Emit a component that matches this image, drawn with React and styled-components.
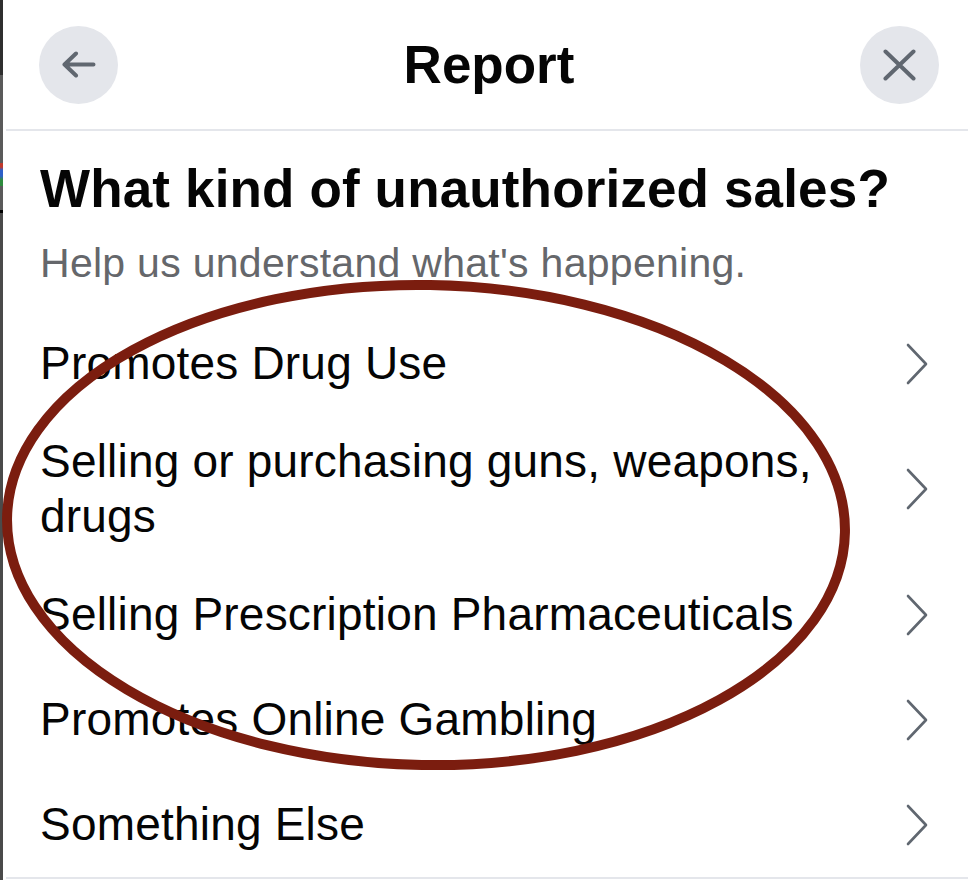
import styled, { createGlobalStyle } from "styled-components";

const GlobalStyle = createGlobalStyle`
  * {
    box-sizing: border-box;
  }
  body {
    margin: 0;
    background: #ffffff;
    font-family: "Liberation Sans", Arial, sans-serif;
  }
`;

const options = [
  "Promotes Drug Use",
  "Selling or purchasing guns, weapons, drugs",
  "Selling Prescription Pharmaceuticals",
  "Promotes Online Gambling",
  "Something Else",
];

export default function App() {
  return (
    <>
      <GlobalStyle />
      <Page>
        <Edge />
        <Sheet>
          <Header>
            <RoundButton aria-label="Back">
              <svg width="34" height="27" viewBox="0 0 34 27">
                <path
                  d="M14 2.5 L2.5 13.5 L14 24.5 M2.5 13.5 H31.5"
                  fill="none"
                  stroke="#606770"
                  strokeWidth="4"
                  strokeLinecap="round"
                  strokeLinejoin="round"
                />
              </svg>
            </RoundButton>
            <Title>Report</Title>
            <RoundButton aria-label="Close">
              <svg width="33" height="32" viewBox="0 0 33 32">
                <path
                  d="M2.5 2.5 L30.5 29.5 M30.5 2.5 L2.5 29.5"
                  fill="none"
                  stroke="#606770"
                  strokeWidth="4"
                  strokeLinecap="round"
                />
              </svg>
            </RoundButton>
          </Header>
          <Heading>What kind of unauthorized sales?</Heading>
          <Sub>Help us understand what's happening.</Sub>
          <List>
            {options.map((label) => (
              <Row key={label}>
                <Label>{label}</Label>
                <svg width="22" height="42" viewBox="0 0 22 42">
                  <path
                    d="M2 2 L20 21 L2 40"
                    fill="none"
                    stroke="#606770"
                    strokeWidth="2.6"
                    strokeLinecap="round"
                    strokeLinejoin="round"
                  />
                </svg>
              </Row>
            ))}
          </List>
        </Sheet>
        <Scribble viewBox="0 0 968 880">
          <ellipse
            cx="426"
            cy="525"
            rx="419"
            ry="240"
            transform="rotate(1 426 525)"
            fill="none"
            stroke="#7b1d0f"
            strokeWidth="10"
          />
        </Scribble>
      </Page>
    </>
  );
}

const Page = styled.div`
  position: relative;
  display: flex;
  width: 968px;
  height: 880px;
  overflow: hidden;
  background: #ffffff;
`;
const Edge = styled.div`
  width: 3px;
  flex-shrink: 0;
  background: linear-gradient(
    to bottom,
    #2f2f2f 0px,
    #2f2f2f 75px,
    #5a5a5a 75px,
    #5a5a5a 163px,
    #c0392b 163px,
    #c0392b 167px,
    #2d5fc8 170px,
    #2d5fc8 176px,
    #2e8b3e 180px,
    #2e8b3e 186px,
    #5a5a5a 186px,
    #5a5a5a 210px,
    #000000 210px,
    #000000 213px,
    #4a4a4a 213px
  );
`;
const Sheet = styled.div`
  flex: 1;
  display: flex;
  flex-direction: column;
  margin-left: 3px;
`;
const Header = styled.header`
  display: flex;
  align-items: center;
  justify-content: space-between;
  height: 131px;
  padding: 0 29px 0 33px;
  border-bottom: 2px solid #e4e6eb;
`;
const RoundButton = styled.div`
  display: flex;
  align-items: center;
  justify-content: center;
  width: 79px;
  height: 78px;
  border-radius: 50%;
  background: #e4e6eb;
`;
const Title = styled.h1`
  margin: 0;
  font-size: 53px;
  font-weight: bold;
  color: #050505;
`;
const Heading = styled.h2`
  margin: 27px 0 0;
  padding: 0 34px;
  font-size: 53px;
  line-height: 62px;
  font-weight: bold;
  letter-spacing: 0.15px;
  color: #050505;
`;
const Sub = styled.p`
  margin: 18px 0 0;
  padding: 0 34px;
  font-size: 41px;
  line-height: 50px;
  letter-spacing: 0.28px;
  color: #65676b;
`;
const List = styled.div`
  display: flex;
  flex-direction: column;
  margin-top: 23px;
  border-bottom: 2px solid #e4e6eb;
`;
const Row = styled.div`
  display: flex;
  align-items: center;
  justify-content: space-between;
  min-height: 105px;
  padding: 18px 40px 18px 34px;
`;
const Label = styled.div`
  max-width: 800px;
  font-size: 46px;
  line-height: 55px;
  letter-spacing: 0.2px;
  color: #050505;
`;
const Scribble = styled.svg`
  position: absolute;
  left: 0;
  top: 0;
  width: 968px;
  height: 880px;
  pointer-events: none;
`;
